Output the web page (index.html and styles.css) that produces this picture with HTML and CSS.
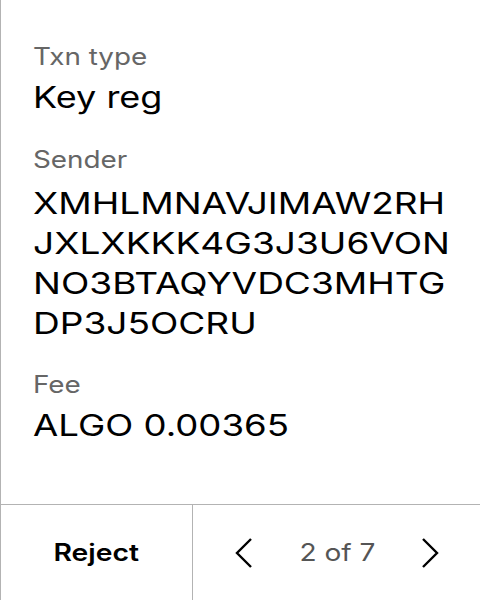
FILE: index.html
```html
<!DOCTYPE html>
<html>
<head>
<meta charset="utf-8">
<link rel="stylesheet" href="styles.css">
</head>
<body>
<div class="screen">
  <main class="details">
    <div class="field">
      <div class="label"><span class="wide">Txn type</span></div>
      <div class="value"><span class="wide">Key reg</span></div>
    </div>
    <div class="field">
      <div class="label"><span class="wide">Sender</span></div>
      <div class="value address"><span class="wide">XMHLMNAVJIMAW2RH<br>JXLXKKK4G3J3U6VON<br>NO3BTAQYVDC3MHTG<br>DP3J5OCRU</span></div>
    </div>
    <div class="field">
      <div class="label"><span class="wide">Fee</span></div>
      <div class="value amount"><span class="wide">ALGO 0.00365</span></div>
    </div>
  </main>
  <footer class="bar">
    <div class="reject"><span class="wide">Reject</span></div>
    <div class="pager">
      <svg class="chev" width="18" height="32" viewBox="0 0 18 32"><path d="M16 2 L2 16 L16 30" fill="none" stroke="#000" stroke-width="2.4"/></svg>
      <span class="count wide">2 of 7</span>
      <svg class="chev" width="18" height="32" viewBox="0 0 18 32"><path d="M2 2 L16 16 L2 30" fill="none" stroke="#000" stroke-width="2.4"/></svg>
    </div>
  </footer>
</div>
</body>
</html>
```

FILE: styles.css
```css
html, body {
  margin: 0;
  padding: 0;
  background: #fff;
}
body {
  font-family: Inter, "Liberation Sans", sans-serif;
  color: #000;
}
.screen {
  width: 480px;
  height: 600px;
  box-sizing: border-box;
  border-left: 1px solid #b3b3b3;
  display: flex;
  flex-direction: column;
  overflow: hidden;
}
.wide {
  display: inline-block;
  transform-origin: 0 50%;
}
.details {
  flex: 1;
  padding: 41px 0 0 32px;
}
.field {
  margin-bottom: 26px;
}
.label {
  font-size: 24px;
  line-height: 32px;
  color: #666;
}
.label .wide {
  transform: scaleX(1.16);
}
.value {
  font-size: 30px;
  line-height: 41px;
  margin-top: 4px;
}
.value .wide {
  transform: scaleX(1.2);
}
.value.address {
  line-height: 40px;
  margin-top: 7px;
}
.value.address .wide {
  transform: scaleX(1.235);
}
.value.amount .wide {
  transform: scaleX(1.22);
}
.bar {
  height: 95px;
  border-top: 1px solid #b3b3b3;
  display: flex;
}
.reject {
  width: 191px;
  border-right: 1px solid #b3b3b3;
  display: flex;
  align-items: center;
  justify-content: center;
  font-size: 24px;
  font-weight: 600;
}
.reject .wide {
  transform-origin: 50% 50%;
  transform: scaleX(1.18);
}
.pager {
  flex: 1;
  display: flex;
  align-items: center;
  justify-content: space-between;
  padding: 0 41px 0 42px;
}
.count {
  font-size: 24px;
  color: #555;
}
.count.wide {
  transform-origin: 50% 50%;
  transform: scaleX(1.17);
}
```
